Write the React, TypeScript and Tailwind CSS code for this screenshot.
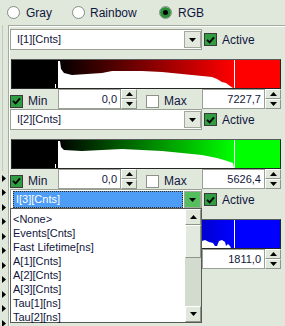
import React from 'react';

const INK = 'text-[#10163c]';

function Tri({ up }: { up?: boolean }) {
  return (
    <svg width="7" height="4" viewBox="0 0 7 4" className="block">
      <path d={up ? 'M0 4h7L3.5 0z' : 'M0 0h7L3.5 4z'} fill="#000" />
    </svg>
  );
}

function Check({ on }: { on?: boolean }) {
  if (!on) return <span className="block h-[13px] w-[13px] shrink-0 border border-[#8d928a] bg-white" />;
  return (
    <span className="flex h-[13px] w-[13px] shrink-0 items-center justify-center border border-[#3a3a3a] bg-[#2f9e42]">
      <svg width="9" height="8" viewBox="0 0 9 8" className="block">
        <path d="M1 3.8 L3.6 6.4 L8 1.4" fill="none" stroke="#000" strokeWidth="1.9" />
      </svg>
    </span>
  );
}

function Radio({ on }: { on?: boolean }) {
  return (
    <span className="flex h-[13px] w-[13px] shrink-0 items-center justify-center rounded-full border border-[#868b84] bg-white">
      {on && (
        <span className="flex h-[11px] w-[11px] items-center justify-center rounded-full bg-[#2b8f3a]">
          <span className="h-[5px] w-[5px] rounded-full bg-black" />
        </span>
      )}
    </span>
  );
}

function Combo({ label, focused }: { label: string; focused?: boolean }) {
  return (
    <div className="relative z-10 flex h-[21px] items-center bg-[#e0e8dc]">
      <div className="flex h-[21px] w-[192px] items-center border border-[#9ba096] bg-white pl-[2px]">
        {focused ? (
          <div className="flex h-[17px] flex-1 items-center border border-dotted border-[#3a2a10] bg-[#4d9cf6] pl-[2px] text-white">
            {label}
          </div>
        ) : (
          <div className={`flex-1 pl-[4px] ${INK}`}>{label}</div>
        )}
        <div
          className={`ml-[1px] flex h-[17px] w-[17px] items-center justify-center border border-[#a3a89f] ${
            focused ? 'bg-[#55bf5f]' : 'bg-[#e3e9df]'
          }`}
        >
          <Tri />
        </div>
      </div>
      <div className="ml-[2px]">
        <Check on />
      </div>
      <span className={`ml-[5px] text-[12px] ${INK}`}>Active</span>
    </div>
  );
}

function Spin({ value, hidden }: { value: string; hidden?: boolean }) {
  return (
    <div className={`flex ${hidden ? 'invisible' : ''}`}>
      <div className={`flex h-[20px] w-[63px] items-center justify-end border border-[#9ba096] bg-white pr-[3px] ${INK}`}>
        {value}
      </div>
      <div className="flex h-[20px] w-[16px] flex-col">
        <div className="flex h-[10px] items-center justify-center border border-t-white border-l-white border-r-[#8f948c] border-b-[#8f948c] bg-[#e0e8dc]">
          <Tri up />
        </div>
        <div className="flex h-[10px] items-center justify-center border border-t-white border-l-white border-r-[#8f948c] border-b-[#8f948c] bg-[#e0e8dc]">
          <Tri />
        </div>
      </div>
    </div>
  );
}

type HistProps = { id: string; color: string; edge: string; bump?: boolean };

function Hist({ id, color, edge, bump }: HistProps) {
  return (
    <div className="ml-[1px] h-[30px] w-[270px] border border-[#262626] border-t-[#5a5a5a]">
      <svg width="268" height="28" viewBox="0 0 268 28" className="block">
        <defs>
          <linearGradient id={id} x1="46" x2="222" y1="0" y2="0" gradientUnits="userSpaceOnUse">
            <stop offset="0" stopColor="#000" />
            <stop offset="1" stopColor={color} />
          </linearGradient>
        </defs>
        <rect width="268" height="28" fill="#000" />
        <rect x="46" width="177" height="28" fill={`url(#${id})`} />
        <rect x="223" width="45" height="28" fill={color} />
        <path d={edge} fill="#fff" />
        {bump && <rect x="43" y="24" width="1" height="4" fill="#fff" />}
        <rect x="222" width="1" height="28" fill="#fff" />
      </svg>
    </div>
  );
}

const blocks = [
  {
    label: 'I[1][Cnts]',
    id: 'gr',
    color: '#ff0000',
    edge: 'M46 28 L46 1 L48 1 L49 9 L52 13 L60 15 L75 14 L90 13 L100 11 L130 11 L150 12 L170 14 L190 16 L200 17 L205 19 L210 22 L214 23 L218 26 L221 28 Z',
    min: '0,0',
    max: '7227,7',
  },
  {
    label: 'I[2][Cnts]',
    id: 'gg',
    color: '#00ff00',
    edge: 'M46 28 L46 1 L48 1 L49 7 L52 10 L70 11 L90 10 L110 9 L130 10 L150 11 L170 13 L190 15 L205 18 L212 20 L218 22 L221 23 L222 28 Z',
    min: '0,0',
    max: '5626,4',
  },
  {
    label: 'I[3][Cnts]',
    id: 'gb',
    color: '#0000ff',
    edge: 'M46 28 L46 2 L48 2 L50 15 L70 17 L120 18 L170 19 L186 20 L190 21 L193 20 L197 22 L201 23 L203 26 L205 26 L207 21 L210 20 L213 22 L214 26 L216 24 L218 26 L219 28 Z',
    min: '0,0',
    max: '1811,0',
  },
];

const items = [
  '<None>',
  'Events[Cnts]',
  'Fast Lifetime[ns]',
  'A[1][Cnts]',
  'A[2][Cnts]',
  'A[3][Cnts]',
  'Tau[1][ns]',
  'Tau[2][ns]',
];

export default function App() {
  return (
    <div className={`relative h-[326px] w-[285px] overflow-hidden bg-[#e0e8dc] font-['Liberation_Sans',Arial,sans-serif] text-[11px] leading-none ${INK}`}>
      <div className="flex h-[25px] items-center pl-[7px] text-[12px]">
        <div className="flex w-[65px] items-center">
          <Radio />
          <span className="ml-[6px]">Gray</span>
        </div>
        <div className="flex w-[87px] items-center">
          <Radio />
          <span className="ml-[5px]">Rainbow</span>
        </div>
        <div className="flex items-center">
          <Radio on />
          <span className="ml-[6px]">RGB</span>
        </div>
      </div>

      <div className="flex h-[301px]">
        <div className="flex w-[8px] flex-col">
          <div className="ml-[2px] h-[146px] w-[1px] shrink-0 bg-[#c2cabe]" />
          {Array.from({ length: 11 }).map((_, i) => (
            <div key={i} className="flex h-[14.5px] shrink-0 items-center pl-[2px]">
              <svg width="4" height="7" viewBox="0 0 4 7" className="block">
                <path d="M0 0L4 3.5L0 7z" fill="#000" />
              </svg>
            </div>
          ))}
        </div>

        <div className="flex-1 border-t border-l border-[#a3ab9f]">
          <div className="h-full border-t border-l border-white pt-[2px]">
            {blocks.map((b, i) => {
              const covered = i === 2;
              return (
                <div key={b.id}>
                  <Combo label={b.label} focused={covered} />
                  <div className="mt-[9px]">
                    <Hist id={b.id} color={b.color} edge={b.edge} bump={i < 2} />
                  </div>
                  <div className="flex h-[20px] overflow-hidden">
                    <div className={`flex w-[48px] items-center pt-[4px] ${covered ? 'invisible' : ''}`}>
                      <Check on />
                      <span className="ml-[5px] text-[12px]">Min</span>
                    </div>
                    <Spin value={b.min} hidden={covered} />
                    <div className={`ml-[9px] flex w-[56px] items-center pt-[4px] ${covered ? 'invisible' : ''}`}>
                      <Check />
                      <span className="ml-[5px] text-[12px]">Max</span>
                    </div>
                    <Spin value={b.max} />
                  </div>
                </div>
              );
            })}
          </div>
        </div>
      </div>

      <div className="absolute left-[10px] top-[208px] z-20 flex h-[115px] w-[192px] border border-[#555a53] bg-white">
        <div className="flex-1 pl-[2px] pt-[3px]">
          {items.map((t) => (
            <div key={t} className="flex h-[14px] items-center">
              {t}
            </div>
          ))}
        </div>
        <div className="flex w-[16px] flex-col bg-[#d3dbcf]">
          <div className="flex h-[16px] items-center justify-center border border-t-white border-l-white border-r-[#8f948c] border-b-[#8f948c] bg-[#e0e8dc]">
            <Tri up />
          </div>
          <div className="h-[33px] border border-t-white border-l-white border-r-[#8f948c] border-b-[#8f948c] bg-[#e2e9de]" />
          <div className="flex-1" />
          <div className="flex h-[16px] items-center justify-center border border-t-white border-l-white border-r-[#8f948c] border-b-[#8f948c] bg-[#e0e8dc]">
            <Tri />
          </div>
        </div>
      </div>
    </div>
  );
}
